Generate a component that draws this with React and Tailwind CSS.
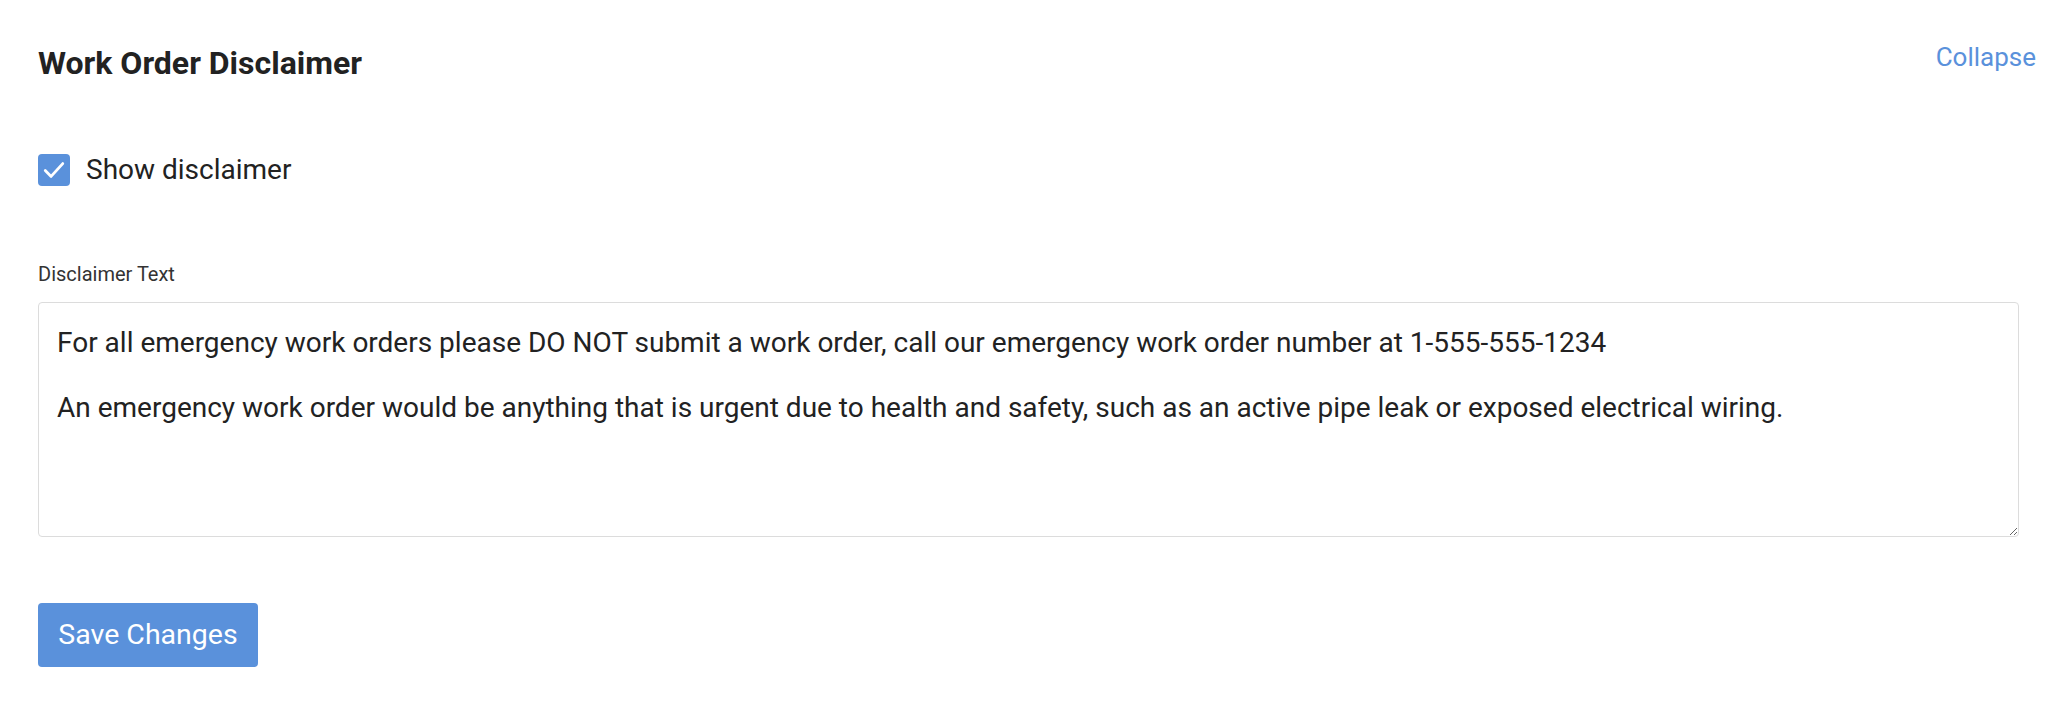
import { useState } from "react";

const initialText =
  "For all emergency work orders please DO NOT submit a work order, call our emergency work order number at 1-555-555-1234\n\nAn emergency work order would be anything that is urgent due to health and safety, such as an active pipe leak or exposed electrical wiring.";

// checkbox + label, blue square with a white tick
const CheckRow = ({ checked, onToggle, children }) => (
  <label className="flex items-center gap-[16px] cursor-pointer select-none">
    <span
      className={`flex items-center justify-center w-[32px] h-[32px] rounded-[4px] ${
        checked ? "bg-[#5a91db]" : "bg-white border-2 border-[#bbb]"
      }`}
      onClick={onToggle}
    >
      {checked && (
        <svg viewBox="0 0 24 24" className="w-[28px] h-[28px]" fill="none" stroke="white" strokeWidth="2.4" strokeLinecap="round" strokeLinejoin="round">
          <path d="M4.5 12.5l5 5L19.5 6.5" />
        </svg>
      )}
    </span>
    <span className="text-[28px] leading-[33px] text-[#222]">{children}</span>
  </label>
);

const App = () => {
  const [showDisclaimer, setShowDisclaimer] = useState(true);
  const [text, setText] = useState(initialText);

  return (
    <div className="min-h-[708px] bg-white pl-[38px] pr-[24px] pt-[42px] font-['Roboto',_'Liberation_Sans',_sans-serif]">
      <div className="flex items-start justify-between">
        <h2 className="mt-[2px] text-[32px] leading-[38px] font-bold text-[#222]">
          Work Order Disclaimer
        </h2>
        <button className="text-[26px] leading-[30px] text-[#5a91db]">Collapse</button>
      </div>

      <div className="pr-[17px]">
        <div className="mt-[71px]">
          <CheckRow checked={showDisclaimer} onToggle={() => setShowDisclaimer((p) => !p)}>
            Show disclaimer
          </CheckRow>
        </div>

        <div className="mt-[77px] text-[20px] leading-[23px] text-[#333]">Disclaimer Text</div>
        <textarea
          className="mt-[16px] block w-full h-[235px] rounded-[4px] border border-[#dcdcdc] px-[18px] pt-[24px] pb-[16px] text-[28px] leading-[32.5px] text-[#222] outline-none"
          value={text}
          onChange={(e) => setText(e.target.value)}
        />

        <button className="mt-[66px] w-[220px] h-[64px] rounded-[4px] bg-[#5a91db] text-[28.5px] text-white">
          Save Changes
        </button>
      </div>
    </div>
  );
};

export default App;
